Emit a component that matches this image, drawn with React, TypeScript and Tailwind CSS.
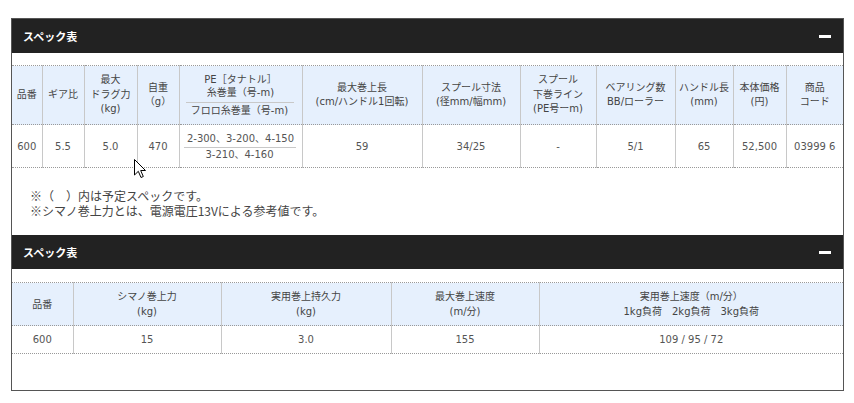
import React from "react";

const font = { fontFamily: '"DejaVu Sans", "Noto Sans CJK JP", sans-serif' };

function Bar() {
  return (
    <div className="flex h-[34px] items-center justify-between bg-[#222] pl-[11px] pr-[12px]">
      <span className="text-[11px] font-bold text-white" style={{ fontFamily: '"Noto Sans CJK JP", sans-serif' }}>
        スペック表
      </span>
      <span className="block h-[3px] w-[12px] bg-white" />
    </div>
  );
}

const th = "border-r border-[#c8c8c8] text-center align-middle font-normal text-[#444] leading-[14.5px] px-[2px]";
const thLast = "text-center align-middle font-normal text-[#444] leading-[14.5px] px-[2px]";
const td = "border-r border-[#c8c8c8] text-center align-middle text-[#555]";
const tdLast = "text-center align-middle text-[#555]";

function Multi({ lines }: { lines: string[] }) {
  return (
    <>
      {lines.map((l, i) => (
        <div key={i} className="whitespace-nowrap">
          {l}
        </div>
      ))}
    </>
  );
}

export default function App() {
  const head1: string[][] = [
    ["品番"],
    ["ギア比"],
    ["最大", "ドラグ力", "(kg)"],
    ["自重", "（g）"],
    [],
    ["最大巻上長", "(cm/ハンドル1回転)"],
    ["スプール寸法", "(径mm/幅mm)"],
    ["スプール", "下巻ライン", "(PE号ーm)"],
    ["ベアリング数", "BB/ローラー"],
    ["ハンドル長", "(mm)"],
    ["本体価格", "(円)"],
    ["商品", "コード"],
  ];
  const widths1 = ["w-[30px]", "w-[42px]", "w-[53px]", "w-[42px]", "w-[123px]", "w-[120px]", "w-[98px]", "w-[76px]", "w-[79px]", "w-[58px]", "w-[53px]", "w-[57px]"];
  const body1 = ["600", "5.5", "5.0", "470", "", "59", "34/25", "-", "5/1", "65", "52,500", "03999 6"];

  const head2: string[][] = [
    ["品番"],
    ["シマノ巻上力", "(kg)"],
    ["実用巻上持久力", "(kg)"],
    ["最大巻上速度", "(m/分)"],
    ["実用巻上速度（m/分）", "1kg負荷　2kg負荷　3kg負荷"],
  ];
  const widths2 = ["w-[61px]", "w-[148px]", "w-[170px]", "w-[148px]", "w-[304px]"];
  const body2 = ["600", "15", "3.0", "155", "109 / 95 / 72"];

  return (
    <div className="relative min-h-[403px] bg-white pl-[11px] pt-[18px]" style={font}>
      <div className="w-[833px] border border-[#555] pb-[36px]">
        <Bar />
        <div className="pt-[12px]">
          <table className="w-full table-fixed border-collapse text-[10px]">
            <colgroup>
              {widths1.map((w, i) => (
                <col key={i} className={w} />
              ))}
            </colgroup>
            <thead>
              <tr className="h-[59px] border-y border-dotted border-[#999] bg-[#e6f0fd]">
                {head1.map((h, i) =>
                  i === 4 ? (
                    <th key={i} className={th + " px-0"}>
                      <div className="leading-[13px]">
                        <div>PE［タナトル］</div>
                        <div>糸巻量（号-m)</div>
                        <div className="ml-[4px] mr-[6px] mt-[3px] border-t border-[#c8c8c8] pt-[1px]">フロロ糸巻量（号-m)</div>
                      </div>
                    </th>
                  ) : (
                    <th key={i} className={i === head1.length - 1 ? thLast : th}>
                      <Multi lines={h} />
                    </th>
                  )
                )}
              </tr>
            </thead>
            <tbody>
              <tr className="h-[43px] border-b border-dotted border-[#999]">
                {body1.map((b, i) =>
                  i === 4 ? (
                    <td key={i} className={td}>
                      <div className="leading-[13px]">
                        <div className="whitespace-nowrap">2-300、3-200、4-150</div>
                        <div className="ml-[4px] mr-[6px] mt-[2px] border-t border-[#c8c8c8]">3-210、4-160</div>
                      </div>
                    </td>
                  ) : (
                    <td key={i} className={i === body1.length - 1 ? tdLast : td}>
                      {b}
                    </td>
                  )
                )}
              </tr>
            </tbody>
          </table>
        </div>
        <div className="pb-[17px] pl-[18px] pt-[20px] text-[12px] leading-[15px] text-[#444]" style={{ fontFamily: '"Noto Sans CJK JP", sans-serif' }}>
          <div>※（　）内は予定スペックです。</div>
          <div>※シマノ巻上力とは、電源電圧13Vによる参考値です。</div>
        </div>
        <Bar />
        <div className="pt-[13px]">
          <table className="w-full table-fixed border-collapse text-[10px]">
            <colgroup>
              {widths2.map((w, i) => (
                <col key={i} className={w} />
              ))}
            </colgroup>
            <thead>
              <tr className="h-[43px] border-y border-dotted border-[#999] bg-[#e6f0fd]">
                {head2.map((h, i) => (
                  <th key={i} className={(i === head2.length - 1 ? thLast : th) + " leading-[15px]"}>
                    <Multi lines={h} />
                  </th>
                ))}
              </tr>
            </thead>
            <tbody>
              <tr className="h-[28px] border-b border-dotted border-[#999]">
                {body2.map((b, i) => (
                  <td key={i} className={i === body2.length - 1 ? tdLast : td}>
                    {b}
                  </td>
                ))}
              </tr>
            </tbody>
          </table>
        </div>
      </div>
      <svg className="absolute left-[134px] top-[159px]" width="13" height="20" viewBox="0 0 13 20">
        <path d="M0.5 0.5 L0.5 16 L4.3 12.3 L7 18.5 L9.3 17.5 L6.7 11.5 L11.5 11.5 Z" fill="#fff" stroke="#000" strokeWidth="1" strokeLinejoin="miter" />
      </svg>
    </div>
  );
}
